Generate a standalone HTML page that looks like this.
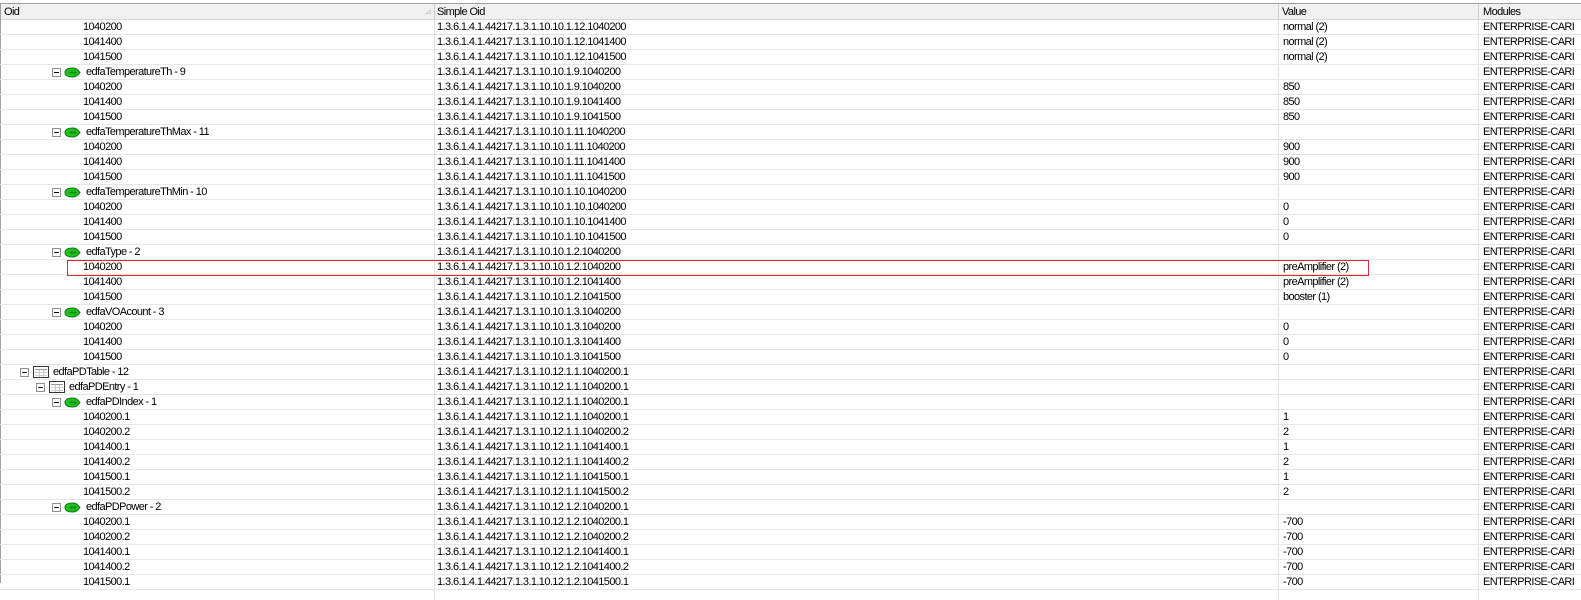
<!DOCTYPE html>
<html><head><meta charset="utf-8"><style>
*{margin:0;padding:0;box-sizing:border-box}
body{width:1581px;height:583px;overflow:hidden;background:#fff;font-family:"Liberation Sans",sans-serif;font-size:11px;letter-spacing:-0.6px;color:#000;position:relative}
.hd{position:absolute;left:0;top:3px;width:1581px;height:17px;background:#f0f0f0;border-top:1px solid #a0a0a0;border-bottom:1px solid #d5d5d5}
.hd span{position:absolute;top:1px;line-height:14px}
.vl{position:absolute;top:3px;width:1px;height:580px;background:#e3e3e3}
.hv{position:absolute;top:4px;width:1px;height:15px;background:#d0d0d0}
#rows{position:absolute;left:0;top:20px;width:1581px}
.r{position:relative;height:15px;border-bottom:1px solid #e6e6e6}
.r span{position:absolute;top:0;line-height:14px;white-space:nowrap}
.b{left:437px}.c{left:1283px}.d{left:1483px}
.v{left:83px}
.mb{position:absolute;top:3px;width:9px;height:9px;border:1px solid #919191;background:#fff}
.mb:after{content:"";position:absolute;left:1px;top:3px;width:5px;height:1px;background:#000}
.lf{position:absolute;top:2px;width:17px;height:11px}
.tb{position:absolute;top:1px;width:16px;height:12px;border:1px solid #333;background:#fff}
.tb:before{content:"";position:absolute;left:1px;top:2px;width:12px;height:1px;background:#999;box-shadow:0 3px 0 #ccc,0 6px 0 #ccc}
.tb:after{content:"";position:absolute;left:5px;top:3px;width:1px;height:7px;background:#ccc;box-shadow:4px 0 0 #ccc}
</style></head><body>
<div class="hd"><span style="left:4px">Oid</span><span style="left:425px;color:#bbb;font-size:8px">⊿</span><span style="left:437px">Simple Oid</span><span style="left:1282px">Value</span><span style="left:1483px">Modules</span></div>
<div class="hv" style="left:434px"></div><div class="hv" style="left:1278px"></div><div class="hv" style="left:1478px"></div>
<div style="position:absolute;left:0;top:3px;width:1px;height:580px;background:#a0a0a0"></div>
<div id="rows">
<div class="r"><span class="v">1040200</span><span class="b">1.3.6.1.4.1.44217.1.3.1.10.10.1.12.1040200</span><span class="c">normal (2)</span><span class="d">ENTERPRISE-CARI</span></div>
<div class="r"><span class="v">1041400</span><span class="b">1.3.6.1.4.1.44217.1.3.1.10.10.1.12.1041400</span><span class="c">normal (2)</span><span class="d">ENTERPRISE-CARI</span></div>
<div class="r"><span class="v">1041500</span><span class="b">1.3.6.1.4.1.44217.1.3.1.10.10.1.12.1041500</span><span class="c">normal (2)</span><span class="d">ENTERPRISE-CARI</span></div>
<div class="r"><i class="mb" style="left:52px"></i><svg class="lf" style="left:64px"><path d="M1 5.5C1 2 5 1 9 1S15 4 16 5.5C15 7 13 10 9 10S1 9 1 5.5Z" fill="#22c022" stroke="#0a7a0a"/><path d="M5 5.5H13M8 3.5V7.5M11 3.5V7.5" stroke="#0a7a0a" stroke-width=".8"/></svg><span style="left:86px">edfaTemperatureTh - 9</span><span class="b">1.3.6.1.4.1.44217.1.3.1.10.10.1.9.1040200</span><span class="d">ENTERPRISE-CARI</span></div>
<div class="r"><span class="v">1040200</span><span class="b">1.3.6.1.4.1.44217.1.3.1.10.10.1.9.1040200</span><span class="c">850</span><span class="d">ENTERPRISE-CARI</span></div>
<div class="r"><span class="v">1041400</span><span class="b">1.3.6.1.4.1.44217.1.3.1.10.10.1.9.1041400</span><span class="c">850</span><span class="d">ENTERPRISE-CARI</span></div>
<div class="r"><span class="v">1041500</span><span class="b">1.3.6.1.4.1.44217.1.3.1.10.10.1.9.1041500</span><span class="c">850</span><span class="d">ENTERPRISE-CARI</span></div>
<div class="r"><i class="mb" style="left:52px"></i><svg class="lf" style="left:64px"><path d="M1 5.5C1 2 5 1 9 1S15 4 16 5.5C15 7 13 10 9 10S1 9 1 5.5Z" fill="#22c022" stroke="#0a7a0a"/><path d="M5 5.5H13M8 3.5V7.5M11 3.5V7.5" stroke="#0a7a0a" stroke-width=".8"/></svg><span style="left:86px">edfaTemperatureThMax - 11</span><span class="b">1.3.6.1.4.1.44217.1.3.1.10.10.1.11.1040200</span><span class="d">ENTERPRISE-CARI</span></div>
<div class="r"><span class="v">1040200</span><span class="b">1.3.6.1.4.1.44217.1.3.1.10.10.1.11.1040200</span><span class="c">900</span><span class="d">ENTERPRISE-CARI</span></div>
<div class="r"><span class="v">1041400</span><span class="b">1.3.6.1.4.1.44217.1.3.1.10.10.1.11.1041400</span><span class="c">900</span><span class="d">ENTERPRISE-CARI</span></div>
<div class="r"><span class="v">1041500</span><span class="b">1.3.6.1.4.1.44217.1.3.1.10.10.1.11.1041500</span><span class="c">900</span><span class="d">ENTERPRISE-CARI</span></div>
<div class="r"><i class="mb" style="left:52px"></i><svg class="lf" style="left:64px"><path d="M1 5.5C1 2 5 1 9 1S15 4 16 5.5C15 7 13 10 9 10S1 9 1 5.5Z" fill="#22c022" stroke="#0a7a0a"/><path d="M5 5.5H13M8 3.5V7.5M11 3.5V7.5" stroke="#0a7a0a" stroke-width=".8"/></svg><span style="left:86px">edfaTemperatureThMin - 10</span><span class="b">1.3.6.1.4.1.44217.1.3.1.10.10.1.10.1040200</span><span class="d">ENTERPRISE-CARI</span></div>
<div class="r"><span class="v">1040200</span><span class="b">1.3.6.1.4.1.44217.1.3.1.10.10.1.10.1040200</span><span class="c">0</span><span class="d">ENTERPRISE-CARI</span></div>
<div class="r"><span class="v">1041400</span><span class="b">1.3.6.1.4.1.44217.1.3.1.10.10.1.10.1041400</span><span class="c">0</span><span class="d">ENTERPRISE-CARI</span></div>
<div class="r"><span class="v">1041500</span><span class="b">1.3.6.1.4.1.44217.1.3.1.10.10.1.10.1041500</span><span class="c">0</span><span class="d">ENTERPRISE-CARI</span></div>
<div class="r"><i class="mb" style="left:52px"></i><svg class="lf" style="left:64px"><path d="M1 5.5C1 2 5 1 9 1S15 4 16 5.5C15 7 13 10 9 10S1 9 1 5.5Z" fill="#22c022" stroke="#0a7a0a"/><path d="M5 5.5H13M8 3.5V7.5M11 3.5V7.5" stroke="#0a7a0a" stroke-width=".8"/></svg><span style="left:86px">edfaType - 2</span><span class="b">1.3.6.1.4.1.44217.1.3.1.10.10.1.2.1040200</span><span class="d">ENTERPRISE-CARI</span></div>
<div class="r"><span class="v">1040200</span><span class="b">1.3.6.1.4.1.44217.1.3.1.10.10.1.2.1040200</span><span class="c">preAmplifier (2)</span><span class="d">ENTERPRISE-CARI</span></div>
<div class="r"><span class="v">1041400</span><span class="b">1.3.6.1.4.1.44217.1.3.1.10.10.1.2.1041400</span><span class="c">preAmplifier (2)</span><span class="d">ENTERPRISE-CARI</span></div>
<div class="r"><span class="v">1041500</span><span class="b">1.3.6.1.4.1.44217.1.3.1.10.10.1.2.1041500</span><span class="c">booster (1)</span><span class="d">ENTERPRISE-CARI</span></div>
<div class="r"><i class="mb" style="left:52px"></i><svg class="lf" style="left:64px"><path d="M1 5.5C1 2 5 1 9 1S15 4 16 5.5C15 7 13 10 9 10S1 9 1 5.5Z" fill="#22c022" stroke="#0a7a0a"/><path d="M5 5.5H13M8 3.5V7.5M11 3.5V7.5" stroke="#0a7a0a" stroke-width=".8"/></svg><span style="left:86px">edfaVOAcount - 3</span><span class="b">1.3.6.1.4.1.44217.1.3.1.10.10.1.3.1040200</span><span class="d">ENTERPRISE-CARI</span></div>
<div class="r"><span class="v">1040200</span><span class="b">1.3.6.1.4.1.44217.1.3.1.10.10.1.3.1040200</span><span class="c">0</span><span class="d">ENTERPRISE-CARI</span></div>
<div class="r"><span class="v">1041400</span><span class="b">1.3.6.1.4.1.44217.1.3.1.10.10.1.3.1041400</span><span class="c">0</span><span class="d">ENTERPRISE-CARI</span></div>
<div class="r"><span class="v">1041500</span><span class="b">1.3.6.1.4.1.44217.1.3.1.10.10.1.3.1041500</span><span class="c">0</span><span class="d">ENTERPRISE-CARI</span></div>
<div class="r"><i class="mb" style="left:20px"></i><i class="tb" style="left:33px"></i><span style="left:53px">edfaPDTable - 12</span><span class="b">1.3.6.1.4.1.44217.1.3.1.10.12.1.1.1040200.1</span><span class="d">ENTERPRISE-CARI</span></div>
<div class="r"><i class="mb" style="left:36px"></i><i class="tb" style="left:49px"></i><span style="left:69px">edfaPDEntry - 1</span><span class="b">1.3.6.1.4.1.44217.1.3.1.10.12.1.1.1040200.1</span><span class="d">ENTERPRISE-CARI</span></div>
<div class="r"><i class="mb" style="left:52px"></i><svg class="lf" style="left:64px"><path d="M1 5.5C1 2 5 1 9 1S15 4 16 5.5C15 7 13 10 9 10S1 9 1 5.5Z" fill="#22c022" stroke="#0a7a0a"/><path d="M5 5.5H13M8 3.5V7.5M11 3.5V7.5" stroke="#0a7a0a" stroke-width=".8"/></svg><span style="left:86px">edfaPDIndex - 1</span><span class="b">1.3.6.1.4.1.44217.1.3.1.10.12.1.1.1040200.1</span><span class="d">ENTERPRISE-CARI</span></div>
<div class="r"><span class="v">1040200.1</span><span class="b">1.3.6.1.4.1.44217.1.3.1.10.12.1.1.1040200.1</span><span class="c">1</span><span class="d">ENTERPRISE-CARI</span></div>
<div class="r"><span class="v">1040200.2</span><span class="b">1.3.6.1.4.1.44217.1.3.1.10.12.1.1.1040200.2</span><span class="c">2</span><span class="d">ENTERPRISE-CARI</span></div>
<div class="r"><span class="v">1041400.1</span><span class="b">1.3.6.1.4.1.44217.1.3.1.10.12.1.1.1041400.1</span><span class="c">1</span><span class="d">ENTERPRISE-CARI</span></div>
<div class="r"><span class="v">1041400.2</span><span class="b">1.3.6.1.4.1.44217.1.3.1.10.12.1.1.1041400.2</span><span class="c">2</span><span class="d">ENTERPRISE-CARI</span></div>
<div class="r"><span class="v">1041500.1</span><span class="b">1.3.6.1.4.1.44217.1.3.1.10.12.1.1.1041500.1</span><span class="c">1</span><span class="d">ENTERPRISE-CARI</span></div>
<div class="r"><span class="v">1041500.2</span><span class="b">1.3.6.1.4.1.44217.1.3.1.10.12.1.1.1041500.2</span><span class="c">2</span><span class="d">ENTERPRISE-CARI</span></div>
<div class="r"><i class="mb" style="left:52px"></i><svg class="lf" style="left:64px"><path d="M1 5.5C1 2 5 1 9 1S15 4 16 5.5C15 7 13 10 9 10S1 9 1 5.5Z" fill="#22c022" stroke="#0a7a0a"/><path d="M5 5.5H13M8 3.5V7.5M11 3.5V7.5" stroke="#0a7a0a" stroke-width=".8"/></svg><span style="left:86px">edfaPDPower - 2</span><span class="b">1.3.6.1.4.1.44217.1.3.1.10.12.1.2.1040200.1</span><span class="d">ENTERPRISE-CARI</span></div>
<div class="r"><span class="v">1040200.1</span><span class="b">1.3.6.1.4.1.44217.1.3.1.10.12.1.2.1040200.1</span><span class="c">-700</span><span class="d">ENTERPRISE-CARI</span></div>
<div class="r"><span class="v">1040200.2</span><span class="b">1.3.6.1.4.1.44217.1.3.1.10.12.1.2.1040200.2</span><span class="c">-700</span><span class="d">ENTERPRISE-CARI</span></div>
<div class="r"><span class="v">1041400.1</span><span class="b">1.3.6.1.4.1.44217.1.3.1.10.12.1.2.1041400.1</span><span class="c">-700</span><span class="d">ENTERPRISE-CARI</span></div>
<div class="r"><span class="v">1041400.2</span><span class="b">1.3.6.1.4.1.44217.1.3.1.10.12.1.2.1041400.2</span><span class="c">-700</span><span class="d">ENTERPRISE-CARI</span></div>
<div class="r"><span class="v">1041500.1</span><span class="b">1.3.6.1.4.1.44217.1.3.1.10.12.1.2.1041500.1</span><span class="c">-700</span><span class="d">ENTERPRISE-CARI</span></div>
</div>
<div class="vl" style="left:434px;top:20px"></div><div class="vl" style="left:1278px;top:20px"></div><div class="vl" style="left:1478px;top:20px"></div>
<div style="position:absolute;left:67px;top:260px;width:1302px;height:16px;border:1px solid #e0282e"></div>
</body></html>
